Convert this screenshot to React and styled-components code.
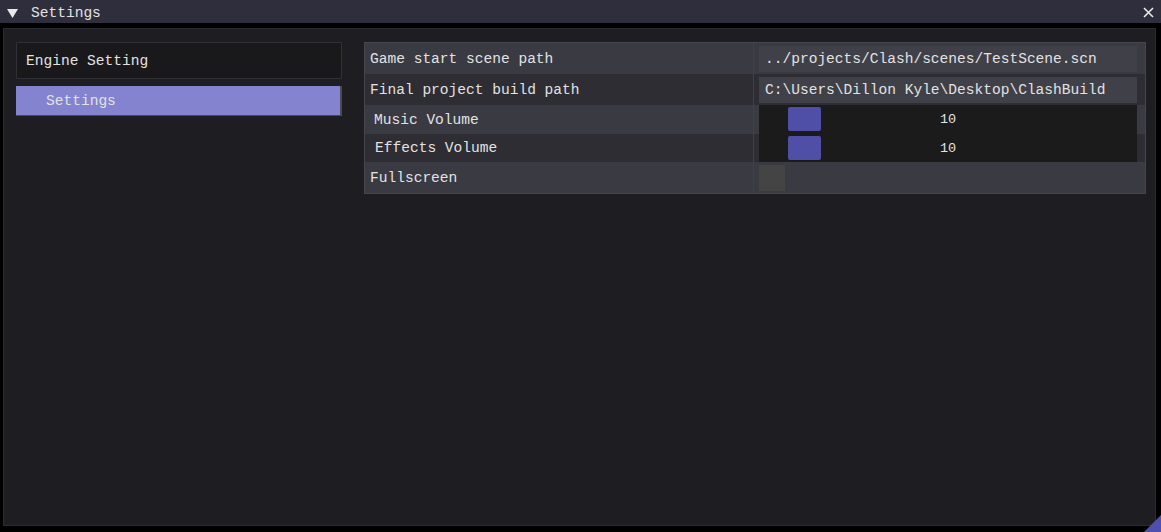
import React from "react";
import styled, { createGlobalStyle } from "styled-components";

const GlobalStyle = createGlobalStyle`
  html, body { margin: 0; padding: 0; background: #000; }
  body {
    width: 1161px;
    height: 532px;
    overflow: hidden;
    font-family: "Liberation Mono", "DejaVu Sans Mono", monospace;
    font-size: 14.56px;
    color: #e2e2e2;
  }
  * { box-sizing: border-box; }
`;

const Screen = styled.div`
  position: relative;
  display: flex;
  flex-direction: column;
  height: 532px;
  background: #000;
`;

const TitleBar = styled.div`
  display: flex;
  align-items: center;
  height: 23px;
  padding: 2px 7px 0 7px;
  background: #2f2e3c;
  flex-shrink: 0;
`;

const TitleText = styled.span`
  margin-left: 13px;
`;

const CloseButton = styled.span`
  margin-left: auto;
  display: flex;
  align-items: center;
`;

const Window = styled.div`
  flex: 1;
  margin: 5px 5px 6px 3px;
  border: 1px solid #2b2b31;
  background: #1e1e22;
  padding: 13px 9px 0 12px;
  display: flex;
  align-items: flex-start;
`;

const SidePanel = styled.div`
  width: 326px;
  display: flex;
  flex-direction: column;
  gap: 7px;
  flex-shrink: 0;
`;

const GroupHeader = styled.div`
  height: 37px;
  display: flex;
  align-items: center;
  padding: 1px 0 0 9px;
  background: #19191c;
  border: 1px solid #303036;
  border-radius: 1px;
`;

const NavItem = styled.div`
  height: 30px;
  display: flex;
  align-items: center;
  padding-left: 30px;
  background: ${(p) => (p.$active ? "#8383d0" : "transparent")};
  border-right: 2px solid #4a4a55;
  border-bottom: 1px solid #4a4a55;
`;

const Table = styled.div`
  flex: 1;
  margin-left: 22px;
  border: 1px solid #46464f;
  display: flex;
  flex-direction: column;
`;

const Row = styled.div`
  display: grid;
  grid-template-columns: 389px 1fr;
  height: ${(p) => p.$h}px;
  background: ${(p) => (p.$alt ? "#2d2d33" : "#3a3a42")};
`;

const LabelCell = styled.div`
  display: flex;
  align-items: center;
  padding-left: ${(p) => 5 + (p.$indent || 0)}px;
  border-right: 1px solid #414149;
`;

const ValueCell = styled.div`
  display: flex;
  align-items: center;
  padding: 0 8px 0 5px;
`;

const TextInput = styled.div`
  width: 100%;
  height: 26px;
  display: flex;
  align-items: center;
  padding-left: 6px;
  background: #404048;
  white-space: nowrap;
  overflow: hidden;
`;

const SliderFrame = styled.div`
  position: relative;
  width: 100%;
  height: 100%;
  background: #1b1b1c;
  display: flex;
  align-items: center;
  justify-content: center;
`;

const SliderGrab = styled.div`
  position: absolute;
  left: 29px;
  top: 2px;
  width: 33px;
  height: 24px;
  border-radius: 2px;
  background: #4f4fa8;
`;

const SliderValue = styled.span`
  position: relative;
  font-size: 13.5px;
`;

const Checkbox = styled.div`
  width: 26px;
  height: 26px;
  background: #444445;
`;

const ResizeGrip = styled.div`
  position: absolute;
  right: 0;
  bottom: 0;
  width: 17px;
  height: 17px;
  background: #4f4fb0;
  clip-path: polygon(100% 0, 100% 100%, 0 100%);
`;

function Slider({ value }) {
  return (
    <SliderFrame>
      <SliderGrab />
      <SliderValue>{value}</SliderValue>
    </SliderFrame>
  );
}

export default function App() {
  return (
    <>
      <GlobalStyle />
      <Screen>
        <TitleBar>
          <svg width="11" height="10" viewBox="0 0 11 10">
            <polygon points="0,1 11,1 5.5,10" fill="#e8e8e8" />
          </svg>
          <TitleText>Settings</TitleText>
          <CloseButton>
            <svg width="11" height="11" viewBox="0 0 11 11">
              <path d="M1 1 L10 10 M10 1 L1 10" stroke="#e8e8e8" strokeWidth="1.6" />
            </svg>
          </CloseButton>
        </TitleBar>
        <Window>
          <SidePanel>
            <GroupHeader>Engine Setting</GroupHeader>
            <NavItem $active>Settings</NavItem>
          </SidePanel>
          <Table>
            <Row $h={31}>
              <LabelCell>Game start scene path</LabelCell>
              <ValueCell>
                <TextInput>../projects/Clash/scenes/TestScene.scn</TextInput>
              </ValueCell>
            </Row>
            <Row $h={31} $alt>
              <LabelCell>Final project build path</LabelCell>
              <ValueCell>
                <TextInput>C:\Users\Dillon Kyle\Desktop\ClashBuild</TextInput>
              </ValueCell>
            </Row>
            <Row $h={29}>
              <LabelCell $indent={4}>Music Volume</LabelCell>
              <ValueCell>
                <Slider value="10" />
              </ValueCell>
            </Row>
            <Row $h={28} $alt>
              <LabelCell $indent={5}>Effects Volume</LabelCell>
              <ValueCell>
                <Slider value="10" />
              </ValueCell>
            </Row>
            <Row $h={31}>
              <LabelCell>Fullscreen</LabelCell>
              <ValueCell>
                <Checkbox />
              </ValueCell>
            </Row>
          </Table>
        </Window>
        <ResizeGrip />
      </Screen>
    </>
  );
}
